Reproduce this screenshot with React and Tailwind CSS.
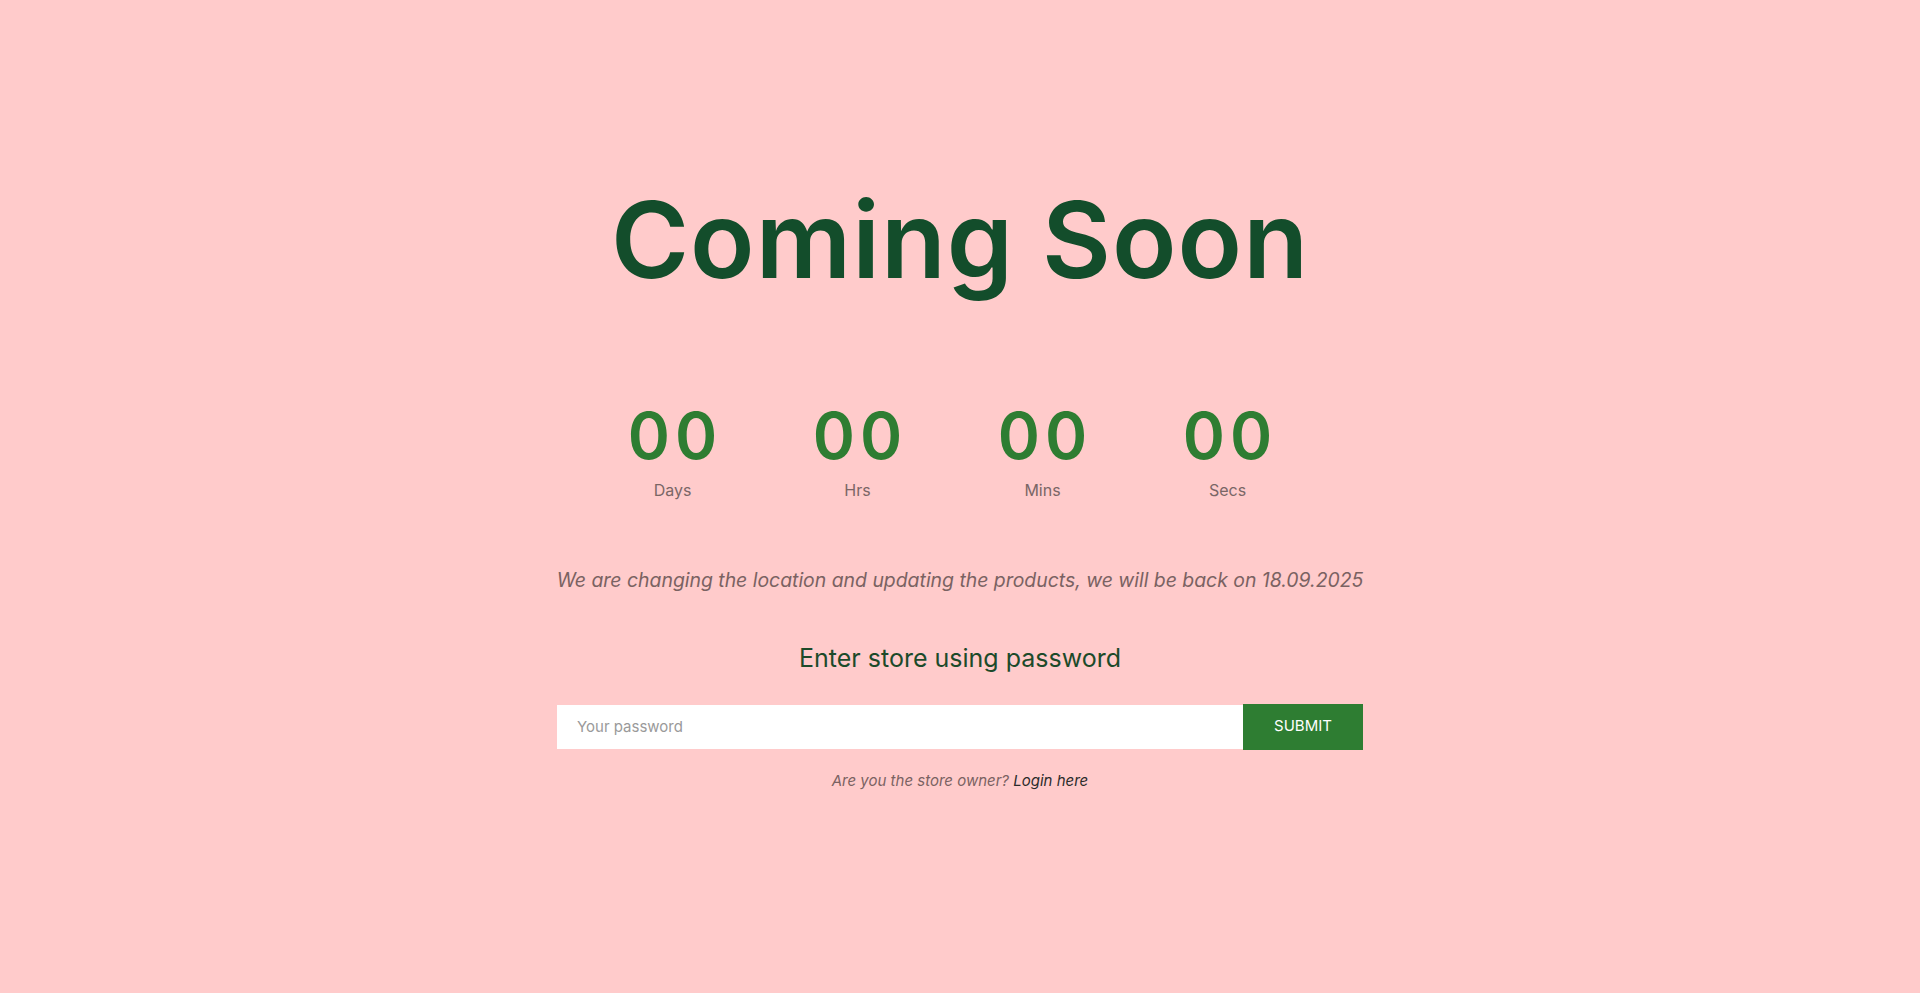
import React from "react";

const UNITS = ["Days", "Hrs", "Mins", "Secs"];

export default function App() {
  return (
    <div
      className="min-h-screen bg-[#ffcbcb] flex flex-col items-center"
      style={{ fontFamily: "Inter, 'Noto Sans', sans-serif" }}
    >
      <div className="w-[806px] flex flex-col items-center pt-[187px]">
        <h1 className="text-[106px] leading-none font-semibold text-[#134d2b] tracking-[0.01em]">
          Coming Soon
        </h1>

        {/* countdown */}
        <div className="flex mt-[111px] mr-[20px]">
          {UNITS.map((u) => (
            <div key={u} className="w-[185px] flex flex-col items-center">
              <span className="text-[64px] leading-none font-semibold text-[#2e7d32] tracking-[5px] pl-[5px]">
                00
              </span>
              <span className="mt-[10px] text-[16px] text-[#7a6666]">{u}</span>
            </div>
          ))}
        </div>

        <p className="mt-[64px] text-[19.4px] italic text-[#7a6262] whitespace-nowrap">
          We are changing the location and updating the products, we will be back on 18.09.2025
        </p>

        <h2 className="mt-[45px] text-[25px] text-[#1c4a2a]">Enter store using password</h2>

        <form className="mt-[26px] w-full flex" onSubmit={(e) => e.preventDefault()}>
          <input
            type="password"
            placeholder="Your password"
            className="flex-1 h-[44px] my-[1px] bg-white px-[20px] text-[15px] placeholder:text-[#9a9a9a] outline-none"
          />
          <button
            type="submit"
            className="w-[120px] h-[46px] bg-[#2e7d32] text-white text-[15px] uppercase"
          >
            Submit
          </button>
        </form>

        <p className="mt-[20px] text-[15px] italic text-[#7a6262]">
          Are you the store owner?{" "}
          <a href="#" className="text-[#2b2b2b]">
            Login here
          </a>
        </p>
      </div>
    </div>
  );
}
